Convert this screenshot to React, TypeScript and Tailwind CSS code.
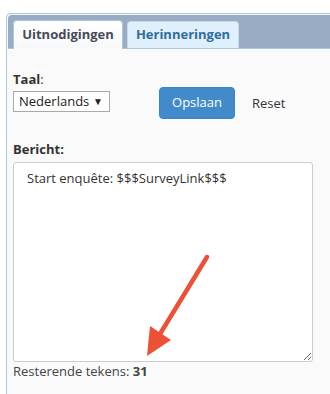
export default function App() {
  return (
    <div className="relative w-[330px] h-[394px] overflow-hidden bg-white font-['Open_Sans',sans-serif] text-[#333]">
      <div className="ml-[6px] mt-[13px] h-[381px] rounded-tl-[5px] border-l border-t border-[#a6c9e2] bg-[#fafafa]">
        {/* tab bar */}
        <div className="ml-px mt-px flex h-[34px] items-end gap-[4px] rounded-tl-[4px] border-b border-[#a6c9e2] bg-[#9aabc4] pl-[5px]">
          <div className="-mb-px flex h-[29px] w-[110px] items-center justify-center rounded-t-[4px] border border-b-0 border-[#a6c9e2] bg-gradient-to-b from-white to-[#f6f8fa] text-[13px] font-bold text-[#474a57]">
            Uitnodigingen
          </div>
          <div className="flex h-[27px] w-[112px] items-center justify-center rounded-t-[4px] border border-b-0 border-[#c5dbec] bg-[#dfeffc] text-[13px] font-bold text-[#2e6e9e]">
            Herinneringen
          </div>
        </div>

        {/* form */}
        <div className="pl-[6px] pt-[22px]">
          <div className="h-[16px] text-[13px] leading-[16px] text-[#333]">
            <span className="font-bold">Taal</span>:
          </div>
          <div className="flex items-start">
            <div className="mt-[4px] flex h-[21px] w-[97px] items-center justify-between border border-[#a9a9a9] bg-white pl-[5px] pr-[6px] text-[13px] text-[#222]">
              <span>Nederlands</span>
              <span className="text-[10px]">▼</span>
            </div>
            <button className="ml-[49px] h-[32px] w-[76px] rounded-[4px] border border-[#3b83c2] bg-[#428bca] text-[13px] text-white">
              Opslaan
            </button>
            <span className="ml-[17px] mt-[6px] text-[13px] leading-[20px] text-[#333]">Reset</span>
          </div>

          <div className="mt-[22px] h-[16px] text-[13px] font-bold leading-[16px] text-[#333]">Bericht:</div>
          <textarea
            readOnly
            defaultValue="Start enquête: $$$SurveyLink$$$"
            className="mt-[5px] block h-[200px] w-[300px] rounded-[3px] border border-[#cccccc] bg-white pl-[13px] pt-[5px] text-[13px] leading-[20px] text-[#333] outline-none"
          />
          <div className="h-[18px] text-[13px] leading-[18px] text-[#444]">
            Resterende tekens: <span className="font-bold">31</span>
          </div>
        </div>
      </div>

      {/* annotation arrow */}
      <svg className="absolute left-0 top-0" width="330" height="394" viewBox="0 0 330 394">
        <line x1="207" y1="257" x2="160" y2="334" stroke="#ec5136" strokeWidth="4.5" strokeLinecap="round" />
        <polygon points="147,356 150,326 171,340" fill="#ec5136" />
      </svg>
    </div>
  );
}
